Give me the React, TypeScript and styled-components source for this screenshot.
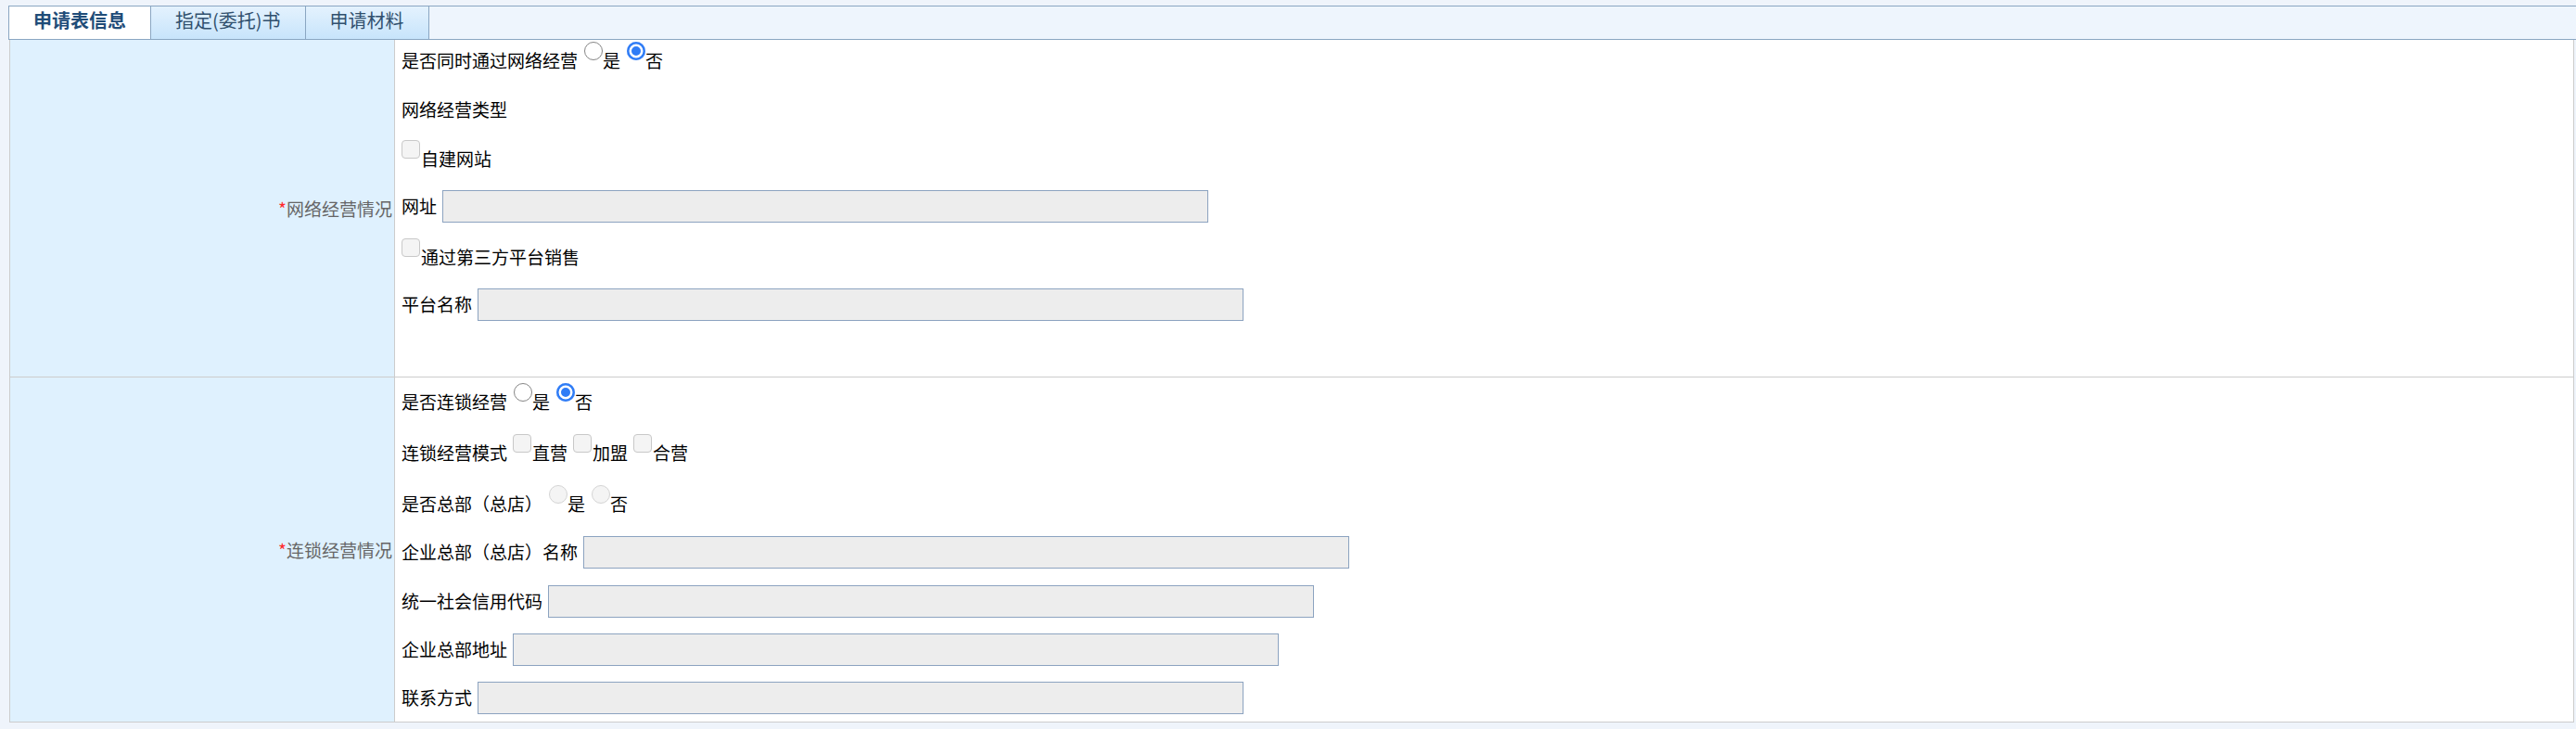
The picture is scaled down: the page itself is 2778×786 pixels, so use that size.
import React from "react";
import styled, { createGlobalStyle, css } from "styled-components";

const GlobalStyle = createGlobalStyle`
  html, body {
    margin: 0;
    padding: 0;
    background: #eff4fb;
  }
  body {
    font-family: "Noto Sans CJK SC", "Noto Sans", sans-serif;
  }
`;

const Page = styled.div`
  width: 2778px;
  height: 786px;
  box-sizing: border-box;
  padding: 6px 0 0 9px;
  background: #eff4fb;
  font-family: "Noto Sans CJK SC", "Noto Sans", sans-serif;
`;

const TabBar = styled.div`
  display: flex;
  height: 37px;
  box-sizing: border-box;
  border-top: 1px solid #8aa6c2;
  border-bottom: 1px solid #8aa6c2;
  border-left: 1px solid #8aa6c2;
  background: #eef5fd;
`;

const Tab = styled.div<{ $active?: boolean }>`
  box-sizing: border-box;
  height: 35px;
  padding: 0 26px 5px;
  line-height: 30px;
  font-size: 20px;
  border-right: 1px solid #8aa6c2;
  white-space: nowrap;
  cursor: pointer;
  ${(p) =>
    p.$active
      ? css`
          background: #ffffff;
          color: #1f4c78;
          font-weight: bold;
        `
      : css`
          background: linear-gradient(#e4f2fe, #c7e4fb);
          color: #31506e;
        `}
`;

const Table = styled.div`
  margin: 0 2px 0 1px;
  border-left: 1px solid #cccccc;
  border-right: 1px solid #cccccc;
`;

const Row = styled.div`
  display: grid;
  grid-template-columns: 415px 1fr;
  border-bottom: 1px solid #cccccc;
`;

const LabelCell = styled.div`
  display: flex;
  align-items: center;
  justify-content: flex-end;
  box-sizing: border-box;
  padding-right: 2px;
  background: #dff1fe;
  border-right: 1px solid #cccccc;
  color: #666666;
  font-size: 19px;
  white-space: nowrap;
`;

const Required = styled.span`
  color: #ff2a2a;
`;

const ContentCell = styled.div<{ $top: number; $bottom: number }>`
  background: #ffffff;
  padding: ${(p) => p.$top}px 0 ${(p) => p.$bottom}px 7px;
`;

const Field = styled.div<{ $mb?: number }>`
  display: flex;
  align-items: center;
  height: 40px;
  line-height: 40px;
  margin-bottom: ${(p) => p.$mb ?? 0}px;
  font-size: 19px;
  color: #000000;
  white-space: nowrap;
`;

const Radio = styled.input.attrs({ type: "radio" })`
  appearance: none;
  -webkit-appearance: none;
  box-sizing: border-box;
  width: 20px;
  height: 20px;
  margin: 0 0 20px 7px;
  border-radius: 50%;
  border: 1.5px solid #858585;
  background: #ffffff;
  flex: none;

  &:checked {
    border: none;
    background: #2f7cf6;
    box-shadow: inset 0 0 0 2.5px #2f7cf6, inset 0 0 0 5px #ffffff;
  }

  &:disabled {
    border: 1px solid #d4d4d4;
    background: #f4f4f4;
  }
`;

const Checkbox = styled.input.attrs({ type: "checkbox" })<{ $first?: boolean }>`
  appearance: none;
  -webkit-appearance: none;
  box-sizing: border-box;
  width: 20px;
  height: 20px;
  margin: 0 1px 20px ${(p) => (p.$first ? 0 : 6)}px;
  border-radius: 4px;
  border: 1px solid #c8c8c8;
  background: #f4f4f4;
  flex: none;
`;

const TextInput = styled.input.attrs({ type: "text", readOnly: true })`
  box-sizing: border-box;
  width: 826px;
  height: 35px;
  margin: 0 0 0 6px;
  border: 1px solid #8ca3c0;
  background: #ededed;
  padding: 0 4px;
  font-size: 19px;
  font-family: inherit;
  outline: none;
`;

export default function App() {
  return (
    <>
      <GlobalStyle />
      <Page>
        <TabBar>
          <Tab $active>申请表信息</Tab>
          <Tab>指定(委托)书</Tab>
          <Tab>申请材料</Tab>
        </TabBar>
        <Table>
          <Row>
            <LabelCell>
              <Required>*</Required>网络经营情况
            </LabelCell>
            <ContentCell $top={2} $bottom={58}>
              <Field $mb={13}>
                是否同时通过网络经营
                <Radio name="online" />是
                <Radio name="online" defaultChecked />否
              </Field>
              <Field $mb={13}>网络经营类型</Field>
              <Field $mb={11}>
                <Checkbox $first />自建网站
              </Field>
              <Field $mb={15}>
                网址
                <TextInput />
              </Field>
              <Field $mb={11}>
                <Checkbox $first />通过第三方平台销售
              </Field>
              <Field>
                平台名称
                <TextInput />
              </Field>
            </ContentCell>
          </Row>
          <Row>
            <LabelCell>
              <Required>*</Required>连锁经营情况
            </LabelCell>
            <ContentCell $top={6} $bottom={6}>
              <Field $mb={15}>
                是否连锁经营
                <Radio name="chain" />是
                <Radio name="chain" defaultChecked />否
              </Field>
              <Field $mb={15}>
                连锁经营模式
                <Checkbox />直营
                <Checkbox />加盟
                <Checkbox />合营
              </Field>
              <Field $mb={12}>
                是否总部（总店）
                <Radio name="hq" disabled />是
                <Radio name="hq" disabled />否
              </Field>
              <Field $mb={13}>
                企业总部（总店）名称
                <TextInput />
              </Field>
              <Field $mb={12}>
                统一社会信用代码
                <TextInput />
              </Field>
              <Field $mb={12}>
                企业总部地址
                <TextInput />
              </Field>
              <Field>
                联系方式
                <TextInput />
              </Field>
            </ContentCell>
          </Row>
        </Table>
      </Page>
    </>
  );
}
